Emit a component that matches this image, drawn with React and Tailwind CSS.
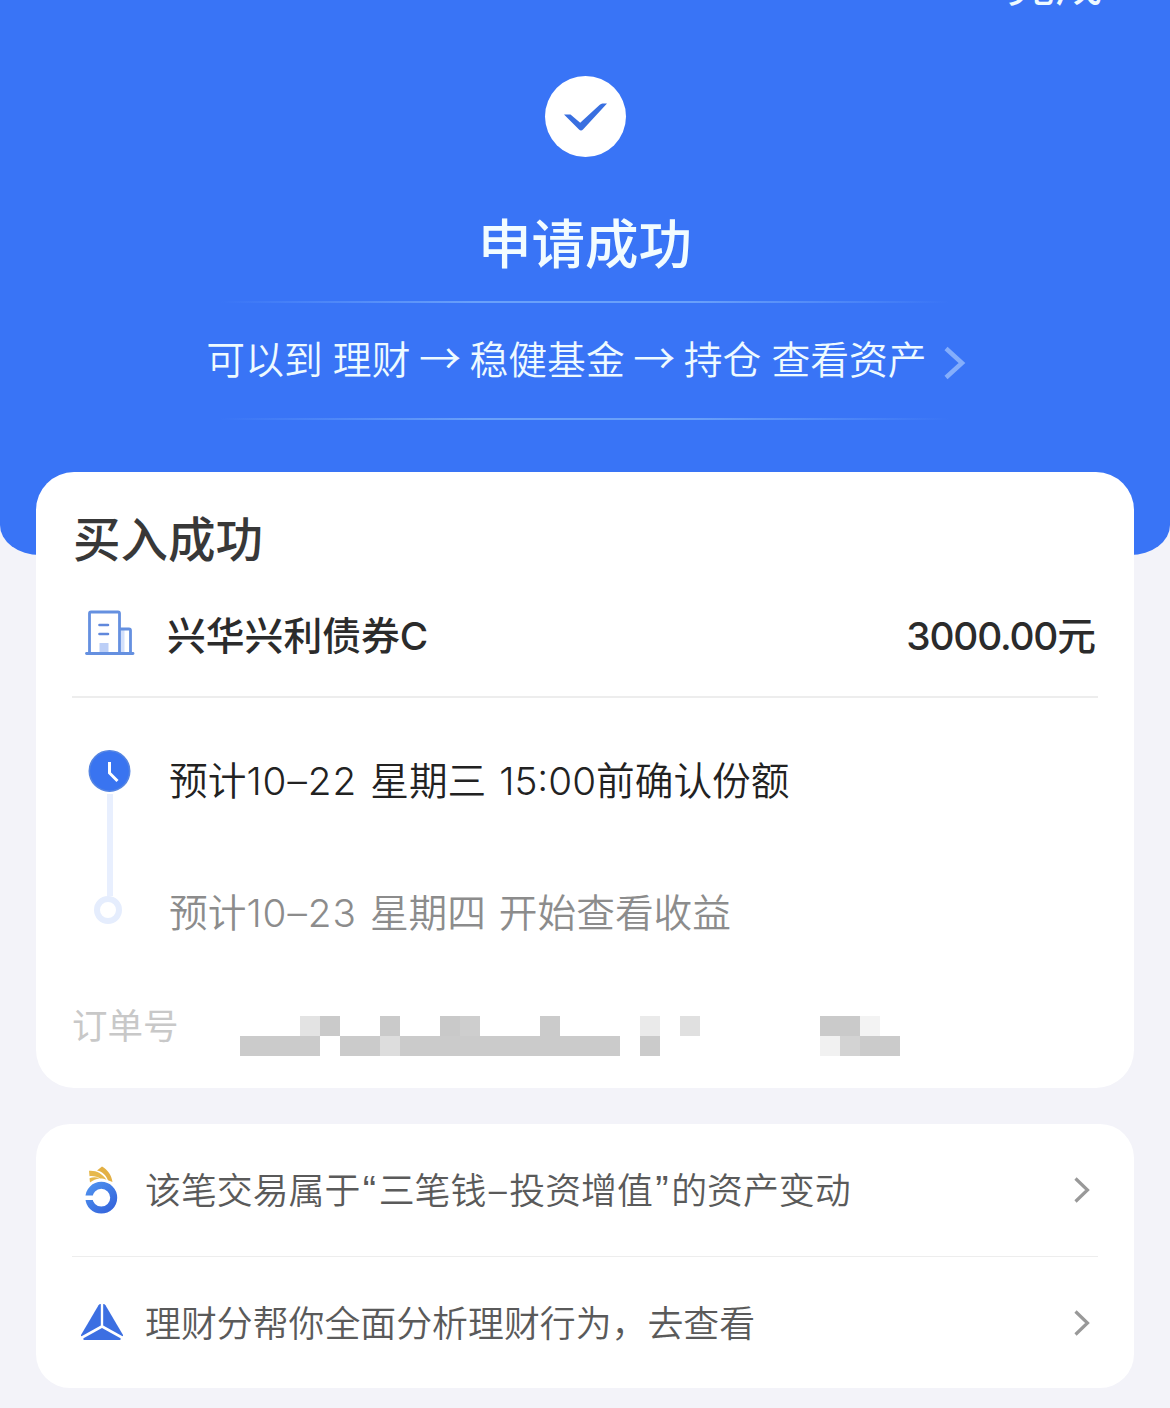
const ORDER_PIXELS = [
  [
    [3, 'bg-[#e3e3e3]'],
    [4, 'bg-[#cacaca]'],
    [7, 'bg-[#cacaca]'],
    [10, 'bg-[#c9c9c9]'],
    [11, 'bg-[#cecece]'],
    [15, 'bg-[#cbcbcb]'],
    [20, 'bg-[#eaeaea]'],
    [22, 'bg-[#e0e0e0]'],
    [29, 'bg-[#cacaca]'],
    [30, 'bg-[#cacaca]'],
    [31, 'bg-[#f3f3f3]'],
  ],
  [
    [0, 'bg-[#cbcbcb]'],
    [1, 'bg-[#cbcbcb]'],
    [2, 'bg-[#cbcbcb]'],
    [3, 'bg-[#cbcbcb]'],
    [5, 'bg-[#cbcbcb]'],
    [6, 'bg-[#cbcbcb]'],
    [7, 'bg-[#dddddd]'],
    [8, 'bg-[#cbcbcb]'],
    [9, 'bg-[#cbcbcb]'],
    [10, 'bg-[#cbcbcb]'],
    [11, 'bg-[#cbcbcb]'],
    [12, 'bg-[#cbcbcb]'],
    [13, 'bg-[#cbcbcb]'],
    [14, 'bg-[#cbcbcb]'],
    [15, 'bg-[#cbcbcb]'],
    [16, 'bg-[#cbcbcb]'],
    [17, 'bg-[#cbcbcb]'],
    [18, 'bg-[#cbcbcb]'],
    [20, 'bg-[#cbcbcb]'],
    [29, 'bg-[#f1f1f1]'],
    [30, 'bg-[#d3d3d3]'],
    [31, 'bg-[#cbcbcb]'],
    [32, 'bg-[#cbcbcb]'],
  ],
]

function BuildingIcon() {
  return (
    <svg width="50" height="46" viewBox="0 0 50 46" fill="none">
      <rect x="14.5" y="33" width="9" height="9" fill="#bccff7" />
      <rect x="36" y="20" width="3.5" height="23" fill="#d3e0fb" />
      <path d="M4.500 43V3.500a1.500 1.500 0 0 1 1.500-1.500h27a1.500 1.500 0 0 1 1.500 1.500V43M34.500 19H44a1.500 1.500 0 0 1 1.500 1.500V43" stroke="#6590e0" strokeWidth="2.800" />
      <path d="M14.500 15h8.500M14.500 24h8.500" stroke="#6088dc" strokeWidth="2.600" strokeLinecap="round" />
      <path d="M1.500 43.500h46.500" stroke="#6590e0" strokeWidth="2.800" strokeLinecap="round" />
    </svg>
  )
}

function RingIcon() {
  return (
    <svg width="44" height="52" viewBox="0 0 44 52" fill="none">
      <defs>
        <linearGradient id="ring" x1="8" y1="20" x2="32" y2="48" gradientUnits="userSpaceOnUse">
          <stop stopColor="#4f92ee" />
          <stop offset="1" stopColor="#3464dc" />
        </linearGradient>
      </defs>
      <circle cx="21.3" cy="33.7" r="12.4" stroke="url(#ring)" strokeWidth="7" />
      <path d="M4 31.500h9v4.500H4z" fill="#fff" />
      <path d="M9.500 14.200c3.500-1.200 7-1.200 10 .2-3.500.6-6.500 1.700-9.500 4z" fill="#e6b84c" />
      <path d="M9 6.800c7-.6 13.500 2.700 17.500 9-2-.9-4.500-1.400-6.500-1.300-2.500-1.800-6-2.700-10.500-2.300z" fill="#e6b84c" />
      <path d="M17 6.500l5-4c5.500 3 9.500 8.500 10.500 15.500l-4.500-1.700c-2-5-5.500-8.800-11-9.800z" fill="#e3b044" />
    </svg>
  )
}

function TriangleIcon() {
  return (
    <svg width="44" height="40" viewBox="0 0 44 40" fill="#3c6fe2">
      <path d="M20.800 1v21.500L1.500 33.200a1 1 0 0 1-.5-1.200L18.500 2.200A2.600 2.600 0 0 1 20.800 1z" />
      <path d="M23.200 1v21.500l19.300 10.700a1 1 0 0 0 .5-1.200L25.500 2.200A2.600 2.600 0 0 0 23.200 1z" />
      <path d="M22 25l18.500 10.200c.5.900 0 1.800-1 1.800h-35c-1 0-1.500-.9-1-1.800z" />
    </svg>
  )
}

function Chevron() {
  return (
    <svg width="18" height="28" viewBox="0 0 18 28" fill="none">
      <path d="M2.500 2.500L14.500 14 2.500 25.500" stroke="#999" strokeWidth="3.2" />
    </svg>
  )
}

function Arrow() {
  return <span className="-mx-[1.6px] font-['Noto_Sans_CJK_SC',sans-serif] text-[42px] leading-none">→</span>
}

function Quote({ children }) {
  return <span className="px-[2.5px] font-['Liberation_Sans',sans-serif] text-[40px] leading-none">{children}</span>
}

function FadeLine() {
  return <div className="h-[2px] w-[730px] bg-[linear-gradient(to_right,transparent,#69a0fa_35%,#69a0fa_65%,transparent)]" />
}

function LinkRow({ icon, children }) {
  return (
    <div className="flex h-[132px] items-center">
      <div className="flex w-[73px] pl-2">{icon}</div>
      <span className="flex-1 pt-px text-[35.9px] font-[350] leading-[54px] text-[#5a5a5a]">{children}</span>
      <div className="pr-[7px]">
        <Chevron />
      </div>
    </div>
  )
}

export default function App() {
  return (
    <div className="h-[1408px] w-[1170px] overflow-hidden whitespace-nowrap bg-[#f3f3f9] font-['Inter','Noto_Sans_CJK_SC',sans-serif]">
      <header className="flex h-[555px] flex-col items-center rounded-b-[40px_30px] bg-[#3974f6]">
        <div className="flex h-[76px] w-full justify-end pr-[67px]">
          <span className="-mt-[40px] h-12 text-[48px] leading-[48px] text-[#eefaff]">完成</span>
        </div>
        <div className="flex size-[81px] items-center justify-center rounded-full bg-white">
          <svg width="44" height="30" viewBox="0 0 44 30" fill="#396fe0">
            <path d="M1 12.500h6.500l9.700 8.300L36.500 3c1-1 2-1.500 3-1.500H44L20 27.500c-1.200 1.300-2.800 1.300-4 0z" />
          </svg>
        </div>
        <h1 className="mt-[58px] h-[60px] text-[53.5px] font-medium leading-[60px] text-[#f2fcff]">申请成功</h1>
        <div className="mt-[26px]">
          <FadeLine />
        </div>
        <div className="flex h-[115px] items-center pl-[3px] text-[38.8px] font-[350] leading-[58px] text-[#eefaff]">
          <span className="pb-px [word-spacing:-0.8px]">
            可以到 理财 <Arrow /> 稳健基金 <Arrow /> 持仓 查看资产
          </span>
          <svg className="ml-4 mt-1" width="24" height="34" viewBox="0 0 24 34" fill="none">
            <path d="M3 2.500L19 17 3 31.500" stroke="#85aefb" strokeWidth="4.5" />
          </svg>
        </div>
        <FadeLine />
      </header>

      <main className="-mt-[83px] px-9">
        <section className="h-[616px] rounded-[38px] bg-white px-9 pt-[38px]">
          <h2 className="h-[60px] pl-px text-[47.5px] font-medium leading-[60px] text-[#383838]">买入成功</h2>
          <div className="mt-[35px] flex h-[60px] items-center text-[38.8px] font-medium text-[#2b2b2b]">
            <div className="w-[95px] pb-[5px] pl-[13px]">
              <BuildingIcon />
            </div>
            <span className="flex-1 pt-0.5">兴华兴利债券C</span>
            <span className="pr-0.5 pt-0.5">
              <span className="font-[450] tracking-[-1.2px]">3000.00</span>元
            </span>
          </div>
          <div className="mt-[31px] h-[2px] bg-[#ededed]" />

          <div className="mt-[52px] flex h-[192px]">
            <div className="flex w-[97px] flex-col items-start">
              <svg className="ml-4" width="44" height="44" viewBox="0 0 44 44" fill="none">
                <circle cx="21.5" cy="21" r="20.2" fill="#3974f0" stroke="#5585e2" strokeWidth="1.6" />
                <path d="M21.500 12v11l8 8" stroke="#fff" strokeWidth="3" />
              </svg>
              <div className="ml-[35px] h-[102px] w-[6px] bg-[#e8effe]" />
              <div className="ml-[22px] size-[28px] rounded-full border-[6px] border-[#e5edfd]" />
            </div>
            <div className="flex flex-col text-[38.7px] font-[350] [word-spacing:2px]">
              <span className="h-[132px] shrink-0 leading-[63px] text-[#222]">
                预计<span className="tracking-[1px]">10–22</span> 星期三 15:00前确认份额
              </span>
              <span className="h-[60px] leading-[63px] text-[#8c8c8c]">
                预计<span className="tracking-[1px]">10–23</span> 星期四 开始查看收益
              </span>
            </div>
          </div>

          <div className="mt-[60px] flex h-[60px]">
            <span className="w-[168px] text-[35.5px] leading-[50px] text-[#c8c8c8]">订单号</span>
            <div className="mt-[14px]">
              {ORDER_PIXELS.map((row, i) => (
                <div key={i} className="grid h-5 grid-cols-[repeat(33,20px)]">
                  {row.map(([col, color]) => (
                    <div key={col} className={`h-5 ${color}`} style={{ gridColumnStart: col + 1 }} />
                  ))}
                </div>
              ))}
            </div>
          </div>
        </section>

        <section className="mt-9 h-[264px] rounded-[34px] bg-white px-9">
          <LinkRow icon={<RingIcon />}>
            该笔交易属于<Quote>“</Quote>三笔钱<span className="px-[2.5px]">–</span>投资增值<Quote>”</Quote>的资产变动
          </LinkRow>
          <div className="h-px bg-[#ededed]" />
          <LinkRow icon={<TriangleIcon />}>理财分帮你全面分析理财行为，去查看</LinkRow>
        </section>
      </main>
    </div>
  )
}
